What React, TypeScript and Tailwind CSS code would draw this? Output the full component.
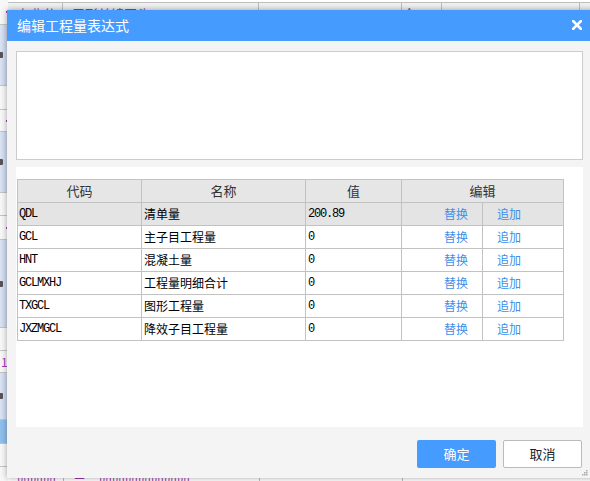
import React from "react";

const cjk = "font-['Microsoft_YaHei','Noto_Sans_CJK_SC',sans-serif]";
const mono = "font-['Liberation_Mono','Noto_Sans_CJK_SC',monospace]";

type Seg = { h: number; kind: "w" | "b" | "bb"; mark?: "dot" | "icon" | "one" };
const segs: Seg[] = [
  { h: 25, kind: "w", mark: "dot" },
  { h: 61, kind: "b", mark: "icon" },
  { h: 24, kind: "w" },
  { h: 22, kind: "w", mark: "dot" },
  { h: 61, kind: "b", mark: "icon" },
  { h: 23, kind: "w" },
  { h: 24, kind: "w", mark: "dot" },
  { h: 88, kind: "b", mark: "icon" },
  { h: 23, kind: "w" },
  { h: 22, kind: "w", mark: "one" },
  { h: 47, kind: "b", mark: "icon" },
  { h: 24, kind: "bb" },
  { h: 23, kind: "w" },
  { h: 16, kind: "w" },
];

const rows = [
  { code: "QDL", name: "清单量", val: "200.89", sel: true },
  { code: "GCL", name: "主子目工程量", val: "0" },
  { code: "HNT", name: "混凝土量", val: "0" },
  { code: "GCLMXHJ", name: "工程量明细合计", val: "0" },
  { code: "TXGCL", name: "图形工程量", val: "0" },
  { code: "JXZMGCL", name: "降效子目工程量", val: "0" },
];

function Background() {
  return (
    <div className="flex h-full w-full">
      <div className="flex w-[8px] shrink-0 flex-col">
        {segs.map((s, i) => (
          <div
            key={i}
            style={{ height: s.h }}
            className={
              "relative flex shrink-0 items-center border-b border-[#c4c4c4] " +
              (s.kind === "b"
                ? "bg-gradient-to-r from-[#dbe4f3] to-[#c8d5ec]"
                : s.kind === "bb"
                ? "bg-[#8fbfea]"
                : "bg-[#f7f7f7]")
            }
          >
            {s.mark === "dot" && <div className="ml-[6px] h-[2px] w-[2px] bg-[#a43cb8]" />}
            {s.mark === "icon" && <div className="h-[6px] w-[3px] rounded-r-[1px] bg-[#555]" />}
            {s.mark === "one" && (
              <span className={"ml-[1px] text-[12px] leading-none text-[#a43cb8] " + cjk}>1</span>
            )}
          </div>
        ))}
      </div>
      <div className="flex flex-1 flex-col justify-between">
        <div className="mt-[2px] flex h-[22px] border-t border-[#bdbdbd] bg-gradient-to-b from-[#f2f2f2] to-[#e4e4e4]">
          <div className={"w-[55px] border-r border-[#bdbdbd] pl-[9px] pt-[1px] text-[13px] text-[#9a3aa8] " + cjk}>专业分析</div>
          <div className={"w-[196px] border-r border-[#bdbdbd] pl-[9px] pt-[1px] text-[13px] text-[#9a3aa8] " + cjk}>三形关镜开头</div>
          <div className="w-[143px] border-r border-[#bdbdbd]" />
          <div className={"w-[40px] border-r border-[#bdbdbd] pl-[4px] text-[12px] text-[#9a3aa8] " + cjk}>^</div>
          <div className="w-[138px] border-r border-[#bdbdbd]" />
          <div className="flex-1" />
        </div>
        <div className="flex h-[4px] overflow-hidden">
          <div className={"w-[55px] pl-[9px] text-[13px] leading-[10px] text-[#9a3aa8] " + cjk}>四四四四</div>
          <div className={"w-[196px] border-l border-[#bdbdbd] pl-[9px] text-[13px] leading-[10px] text-[#9a3aa8] " + cjk}>二三四四四四四四四</div>
          <div className="w-[143px] border-l border-[#bdbdbd]" />
          <div className="flex-1 border-l border-[#bdbdbd]" />
        </div>
      </div>
    </div>
  );
}

function Dialog() {
  return (
    <div className="absolute left-[7px] top-[10px] flex h-[468px] w-[590px] flex-col bg-[#f4f4f4] shadow-[0_0_6px_rgba(0,0,0,0.35)]">
      <div className="flex h-[31px] shrink-0 items-center justify-between bg-[#459bfe] pl-[10px] pr-[15px]">
        <span className={"text-[14px] text-white " + cjk}>编辑工程量表达式</span>
        <svg width="10" height="10" viewBox="0 0 10 10" className="mt-[-2px]">
          <path d="M1 1 L9 9 M9 1 L1 9" stroke="white" strokeWidth="2.6" strokeLinecap="square" />
        </svg>
      </div>
      <div className="flex w-[576px] flex-col pl-[9px]">
        <div className="mt-[10px] h-[109px] border border-[#cccccc] bg-white" />
        <div className="mt-[7px] h-[260px] bg-white pl-[1px] pt-[12px]">
          <table className="w-[546px] table-fixed border-collapse">
            <colgroup>
              <col className="w-[124px]" />
              <col className="w-[164px]" />
              <col className="w-[96px]" />
              <col className="w-[81px]" />
              <col className="w-[81px]" />
            </colgroup>
            <thead>
              <tr className="h-[23px] bg-[#e6e6e6]">
                {["代码", "名称", "值"].map((h) => (
                  <th key={h} className={"border border-[#c2c2c2] p-0 text-center text-[13px] font-normal text-[#333] " + cjk}>
                    {h}
                  </th>
                ))}
                <th colSpan={2} className={"border border-[#c2c2c2] p-0 text-center text-[13px] font-normal text-[#333] " + cjk}>
                  编辑
                </th>
              </tr>
            </thead>
            <tbody>
              {rows.map((r) => (
                <tr key={r.code} className={"h-[23px] " + (r.sel ? "bg-[#e4e4e4]" : "bg-white")}>
                  <td className={"border border-[#c2c2c2] p-0 pl-[1px] text-[12px] tracking-[-1.2px] text-black " + mono}>{r.code}</td>
                  <td className={"border border-[#c2c2c2] p-0 pl-[2px] text-[12px] text-black " + cjk}>{r.name}</td>
                  <td className={"border border-[#c2c2c2] p-0 pl-[2px] text-[12px] tracking-[-1.2px] text-black " + mono}>{r.val}</td>
                  <td className={"border border-[#c2c2c2] p-0 pl-[42px] text-[12px] text-[#3d8fea] " + cjk}>替换</td>
                  <td className={"border border-[#c2c2c2] p-0 pl-[14px] text-[12px] text-[#3d8fea] " + cjk}>追加</td>
                </tr>
              ))}
            </tbody>
          </table>
        </div>
        <div className="mt-[13px] flex justify-end gap-[7px] pr-[1px]">
          <button className={"h-[28px] w-[79px] rounded-[2px] bg-[#459bfe] text-[13px] text-white " + cjk}>确定</button>
          <button className={"h-[28px] w-[79px] rounded-[2px] border border-[#bbbbbb] bg-white text-[13px] text-[#222] " + cjk}>取消</button>
        </div>
      </div>
      <svg width="6" height="6" viewBox="0 0 6 6" className="absolute bottom-[2px] left-[575px]">
        <rect x="4" y="0" width="1.5" height="1.5" fill="#aaa" />
        <rect x="2" y="2" width="1.5" height="1.5" fill="#aaa" />
        <rect x="4" y="2" width="1.5" height="1.5" fill="#aaa" />
        <rect x="0" y="4" width="1.5" height="1.5" fill="#aaa" />
        <rect x="2" y="4" width="1.5" height="1.5" fill="#aaa" />
        <rect x="4" y="4" width="1.5" height="1.5" fill="#aaa" />
      </svg>
    </div>
  );
}

export default function App() {
  return (
    <div className="relative h-[481px] w-[590px] overflow-hidden bg-white">
      <Background />
      <Dialog />
    </div>
  );
}
